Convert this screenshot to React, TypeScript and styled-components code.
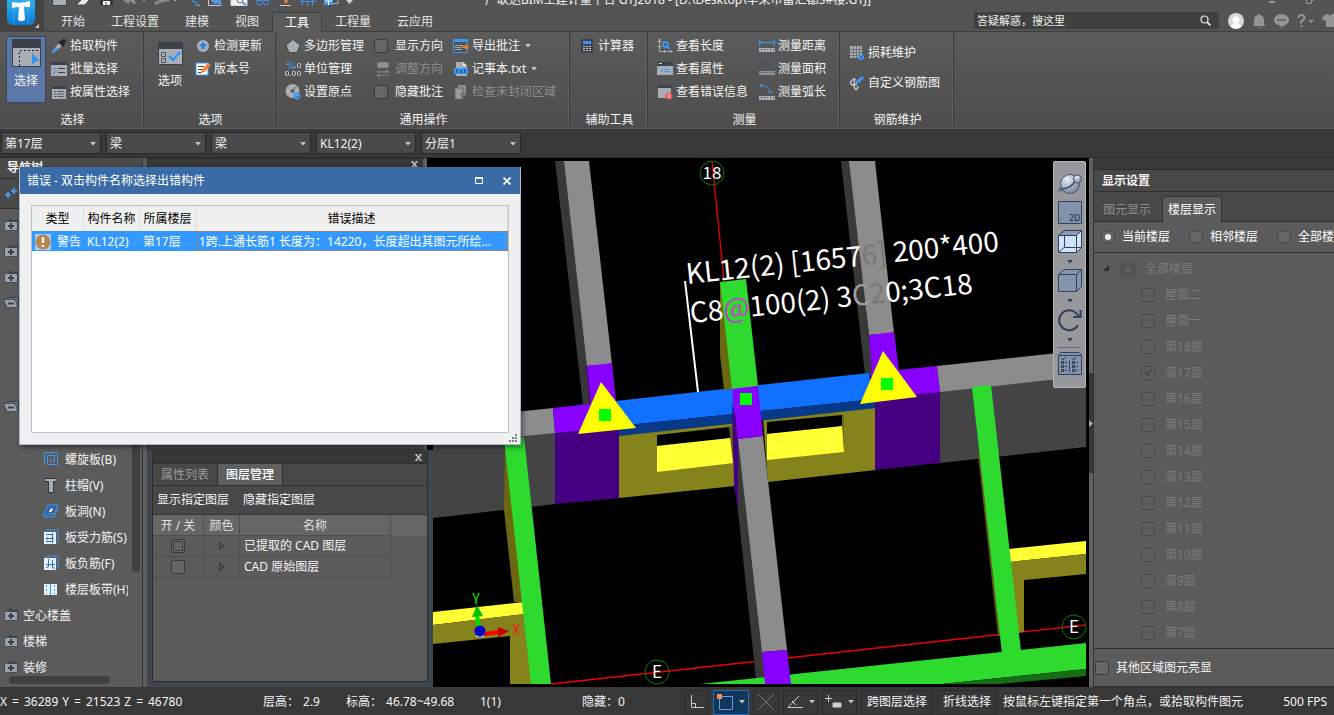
import React from "react";
import styled, { createGlobalStyle, css } from "styled-components";

const Global = createGlobalStyle`
  * { box-sizing: border-box; }
  body { margin: 0; background: #383838; }
  body, button, select, input, table {
    font-family: "Noto Sans", "Noto Sans CJK SC", sans-serif;
    font-size: 12px;
    line-height: 16px;
    color: #f4f4f4;
  }
  button { border: 0; padding: 0; background: none; }
  svg { display: block; flex: none; }
`;

/* ---------- shared controls ---------- */

const Check = styled.input.attrs({ type: "checkbox" })<{ $dim?: boolean; $partial?: boolean }>`
  appearance: none;
  display: grid;
  place-items: center;
  flex: none;
  width: 14px;
  height: 14px;
  margin: 0;
  border: 1px solid ${(p) => (p.$dim ? "#484848" : "#3a3a3a")};
  border-radius: 2px;
  background: ${(p) => (p.$dim ? "#5c5c5c" : "#666")};
  ${(p) =>
    p.$partial &&
    css`
      &::before {
        content: "";
        width: 8px;
        height: 8px;
        border: 1px solid ${p.$dim ? "#484848" : "#3a3a3a"};
        border-radius: 1px;
      }
    `}
  &:checked::before {
    content: "";
    width: 8px;
    height: 8px;
    background: #444;
    clip-path: polygon(0 45%, 18% 32%, 40% 58%, 84% 6%, 100% 20%, 42% 94%);
  }
`;

const Caret = ({ color = "#c4c4c4" }: { color?: string }) => (
  <svg width="6" height="4" viewBox="0 0 6 4">
    <path d="M0 0H6L3 3.5Z" fill={color} />
  </svg>
);

const CloseMark = () => (
  <svg width="7" height="7" viewBox="0 0 7 7" stroke="#bdbdbd" fill="none">
    <path d="M1 .5L6 6.500M6 .5L1 6.500" strokeWidth="1.500" />
    <path d="M0 .5H2.500M4.500 .5H7M0 6.500H2.500M4.500 6.500H7" strokeWidth=".8" />
  </svg>
);

/* ---------- page frame ---------- */

const Page = styled.div`
  display: flex;
  flex-direction: column;
  min-height: 100vh;
  overflow: hidden;
  white-space: nowrap;
`;

const Header = styled.header`
  display: grid;
  grid-template-columns: 44px 1fr;
  background: #545454;
`;

const LogoButton = styled.button`
  height: 32px;
  background: #444;
`;

const HeaderMain = styled.div`
  display: flex;
  flex-direction: column;
  min-width: 0;
`;

const TitleBar = styled.div`
  display: grid;
  grid-template-columns: 424px 1fr 454px;
  height: 12px;
  overflow: hidden;
`;

const QuickTools = styled.div`
  padding-left: 6px;
`;

const AppTitle = styled.h1`
  margin: -9px 0 0;
  height: 18px;
  padding-left: 8px;
  font-size: 12px;
  font-weight: 400;
  line-height: 18px;
  text-align: center;
`;

const WindowButtons = styled.div`
  display: flex;
  justify-content: flex-end;
  gap: 30px;
  padding-right: 20px;
`;

const TabRow = styled.div`
  display: flex;
  border-bottom: 1px solid #3f3f3f;
  height: 20px;
`;

const Tabs = styled.nav`
  display: flex;
  padding-left: 4px;
  margin-right: auto;
`;

const RibbonTab = styled.button<{ $active?: boolean }>`
  height: 20px;
  padding: 0 13px;
  color: #e2e2e2;
  ${(p) =>
    p.$active &&
    css`
      padding: 0 12px;
      color: #fff;
      background: #5b5b5b;
      border: 1px solid #3f3f3f;
      border-bottom: 0;
      border-radius: 2px 2px 0 0;
    `}
`;

const Search = styled.label`
  display: flex;
  align-items: center;
  width: 245px;
  height: 17px;
  padding: 0 8px 0 3px;
  background: #404040;
  input {
    flex: 1;
    min-width: 0;
    border: 0;
    padding: 0;
    background: none;
    font-size: 11px;
    &::placeholder { color: #f0f0f0; opacity: 1; }
  }
`;

const HeaderIcons = styled.div`
  display: flex;
  align-items: center;
  gap: 8px;
  width: 115px;
  height: 17px;
  padding-left: 9px;
  overflow: hidden;
`;

/* ---------- ribbon ---------- */

const Ribbon = styled.div`
  display: flex;
  height: 97px;
  padding-bottom: 3px;
  background: linear-gradient(#5b5b5b, #4d4d4d);
  border-bottom: 1px solid #5a5a5a;
`;

const Group = styled.section<{ $w: number }>`
  display: flex;
  flex-direction: column;
  flex: none;
  width: ${(p) => p.$w}px;
  padding-top: 2px;
  border-right: 1px solid #383838;
  box-shadow: inset -1px 0 #626262;
`;

const GroupBody = styled.div<{ $pad: number; $gap: number }>`
  display: flex;
  flex: none;
  gap: ${(p) => p.$gap}px;
  height: 75px;
  padding-left: ${(p) => p.$pad}px;
`;

const GroupTitle = styled.h2`
  margin: 0;
  padding: 3px 0 0 2px;
  font-size: 12px;
  font-weight: 400;
  line-height: 16px;
  text-align: center;
`;

const BigButton = styled.button<{ $on?: boolean }>`
  display: flex;
  flex-direction: column;
  align-items: center;
  gap: 6px;
  width: 40px;
  height: 67px;
  margin-top: 2px;
  padding-top: 2px;
  border: 1px solid ${(p) => (p.$on ? "#38445a" : "transparent")};
  background: ${(p) => (p.$on ? "#5c78a8" : "none")};
`;

const BigIcon = styled.span`
  display: grid;
  place-items: center;
  height: 28px;
`;

const ItemColumn = styled.div<{ $sparse?: boolean }>`
  display: flex;
  flex-direction: column;
  justify-content: center;
  height: ${(p) => (p.$sparse ? 68 : 69)}px;
  & > * { height: ${(p) => (p.$sparse ? 30 : 23)}px; }
`;

const Tool = styled.button<{ $off?: boolean }>`
  display: flex;
  align-items: center;
  gap: 3px;
  color: ${(p) => (p.$off ? "#8f8f8f" : "#f4f4f4")};
  svg + span + svg { margin-left: 2px; }
`;

const CheckTool = styled.label`
  display: flex;
  align-items: center;
  gap: 7px;
`;

/* ---------- component selectors ---------- */

const SelectorBar = styled.div`
  display: flex;
  gap: 5px;
  height: 29px;
  padding: 3px 1px;
  background: #383838;
  border-bottom: 1px solid #2a2a2a;
`;

const SelectBox = styled.label`
  display: grid;
  grid-template-columns: 1fr 10px;
  align-items: center;
  width: 100px;
  border: 1px solid #282828;
  background: #4a4a4a;
  select {
    grid-area: 1 / 1 / 2 / 3;
    appearance: none;
    width: 100%;
    height: 21px;
    padding: 0 3px;
    border: 0;
    background: none;
  }
  svg { grid-area: 1 / 2; pointer-events: none; }
`;

/* ---------- work area ---------- */

const Workspace = styled.main`
  position: relative;
  display: flex;
  flex: 1;
  min-height: 529px;
`;

const NavPanel = styled.aside`
  display: flex;
  flex-direction: column;
  width: 143px;
  background: #5b5b5b;
  border-right: 1px solid #333;
`;

const NavHeader = styled.h2`
  margin: 0;
  height: 21px;
  padding: 2px 7px;
  font-size: 12px;
  font-weight: 700;
  background: #4a4a4a;
  border-bottom: 1px solid #2e2e2e;
`;

const NavTools = styled.div`
  height: 30px;
  padding: 9px 4px;
  background: #4a4a4a;
  border-bottom: 1px solid #2e2e2e;
`;

const NavBody = styled.div`
  display: flex;
  flex: 1 1 0;
  min-height: 0;
  padding-top: 3px;
  overflow: hidden;
`;

const NavTree = styled.ul`
  flex: 1;
  margin: 0;
  padding: 0;
  list-style: none;
  overflow: hidden;
`;

const NavItem = styled.li<{ $child?: boolean }>`
  display: flex;
  align-items: center;
  gap: ${(p) => (p.$child ? 6 : 4)}px;
  height: 26px;
  padding-left: ${(p) => (p.$child ? 43 : 3)}px;
  span { padding-top: 2px; }
`;

const VScroll = styled.div`
  width: 14px;
  div {
    width: 8px;
    height: 360px;
    margin: 0 4px;
    border-radius: 4px;
    background: #404040;
  }
`;

const HScroll = styled.div`
  height: 14px;
  padding: 3px 9px;
  div {
    width: 101px;
    height: 8px;
    border-radius: 4px;
    background: #404040;
  }
`;

const Splitter = styled.div`
  width: 4px;
  background: #5e5e5e;
`;

const Dock = styled.div`
  display: flex;
  flex-direction: column;
  gap: 1px;
  width: 286px;
  padding-bottom: 5px;
  background: #3e464f;
`;

const UpperDock = styled.div`
  height: 292px;
  margin-right: 6px;
  border: 1px solid #2e2e2e;
  border-right: 4px solid #5e5e5e;
  box-shadow: 6px 0 #000;
  background: #454545;
`;

const PaneBar = styled.div`
  display: flex;
  align-items: center;
  justify-content: flex-end;
  height: 11px;
  padding-right: 5px;
  background: #383838;
`;

const LayerPane = styled.section`
  flex: 1;
  margin: 0 5px;
  border: 1px solid #2c2c2c;
  background: #5b5b5b;
`;

const LayerTabs = styled.div`
  display: flex;
  height: 23px;
  background: #484848;
  border-top: 1px solid #2e2e2e;
  border-bottom: 1px solid #2e2e2e;
`;

const LayerTab = styled.button<{ $active?: boolean }>`
  width: 65px;
  color: ${(p) => (p.$active ? "#fff" : "#9a9a9a")};
  font-weight: ${(p) => (p.$active ? 500 : 400)};
  background: ${(p) => (p.$active ? "#5f5f5f" : "none")};
  border-right: 1px solid #2e2e2e;
`;

const LayerActions = styled.div`
  display: flex;
  gap: 14px;
  height: 29px;
  padding-left: 4px;
  background: #484848;
  border-bottom: 1px solid #333;
`;

const LayerTable = styled.table`
  width: 100%;
  border-collapse: separate;
  border-spacing: 0;
  table-layout: fixed;
  th, td {
    height: 21px;
    padding: 0;
    font-weight: 400;
    text-align: center;
    border-right: 1px solid #4e4e4e;
    border-bottom: 1px solid #4e4e4e;
  }
  th { padding-top: 1px; background: #666; color: #e0e0e0; }
  th:last-child { border: 0; }
  td:nth-child(3) { padding-left: 4px; text-align: left; }
  td:last-child { border: 0; }
  td input, td svg { margin: 0 auto; }
`;

const Viewport = styled.section`
  position: relative;
  flex: 1;
  min-width: 0;
  background: #000;
  overflow: hidden;
`;

const Scene = styled.svg`
  width: 100%;
  height: 100%;
`;

const ViewTools = styled.div`
  position: absolute;
  top: 3px;
  right: 3px;
  display: flex;
  flex-direction: column;
  align-items: center;
  width: 33px;
  height: 227px;
  padding-top: 10px;
  border: 1px solid #b4b6ba;
  border-radius: 2px;
  background: #96989e;
`;

const ViewButton = styled.button`
  display: flex;
  flex-direction: column;
  align-items: center;
  gap: 6px;
  margin-bottom: 5px;
`;

const ViewRule = styled.hr`
  width: 23px;
  margin: 0 0 4px;
  border: 0;
  border-top: 1px solid #6a6a6a;
`;

const RightSplitter = styled.div`
  display: flex;
  flex-direction: column;
  width: 4px;
  background: #616161;
`;

const CollapseHandle = styled.button`
  display: grid;
  place-items: center;
  height: 100px;
  margin-top: 215px;
  background: #383838;
`;

/* ---------- display settings ---------- */

const Settings = styled.aside`
  display: flex;
  flex-direction: column;
  width: 241px;
  background: #5b5b5b;
  border-left: 1px solid #333;
  overflow: hidden;
`;

const SettingsGap = styled.div`
  height: 12px;
  background: #3a3a3a;
  border-bottom: 1px solid #2c2c2c;
`;

const SettingsTitle = styled.h2`
  margin: 0;
  height: 22px;
  padding: 3px 8px;
  font-size: 12px;
  font-weight: 700;
  background: #484848;
  border-bottom: 1px solid #303030;
`;

const SettingsTabs = styled.div`
  display: flex;
  align-items: flex-end;
  height: 30px;
  background: #484848;
  box-shadow: inset 0 -1px #303030;
`;

const SettingsTab = styled.button<{ $active?: boolean }>`
  width: ${(p) => (p.$active ? 60 : 68)}px;
  height: 26px;
  padding-top: 1px;
  ${(p) =>
    p.$active
      ? css`
          color: #fff;
          background: #5b5b5b;
          border: 1px solid #303030;
          border-bottom: 0;
          border-radius: 3px 3px 0 0;
        `
      : css`
          padding-right: 2px;
          color: #8e8e8e;
        `}
`;

const RadioRow = styled.div`
  display: flex;
  gap: 19px;
  height: 31px;
  padding-left: 7px;
  border-bottom: 1px solid #303030;
`;

const RadioLabel = styled.label`
  display: flex;
  align-items: center;
  flex: none;
  gap: 7px;
  color: #fff;
  input {
    appearance: none;
    display: grid;
    place-items: center;
    width: 14px;
    height: 14px;
    margin: 0;
    border: 1px solid #404040;
    border-radius: 50%;
    background: #666;
  }
  input:checked::before {
    content: "";
    width: 6px;
    height: 6px;
    border-radius: 50%;
    background: #eee;
  }
`;

const FloorTree = styled.ul`
  flex: 1;
  margin: 0;
  padding: 3px 0 0;
  list-style: none;
`;

const FloorRow = styled.li<{ $root?: boolean }>`
  display: flex;
  align-items: center;
  gap: 11px;
  height: 26px;
  padding-left: ${(p) => (p.$root ? 8 : 47)}px;
  label {
    display: flex;
    align-items: center;
    gap: 10px;
    color: #7c7c7c;
  }
`;

const SettingsFoot = styled.label`
  display: flex;
  align-items: center;
  gap: 7px;
  height: 39px;
  padding-left: 1px;
  border-top: 1px solid #303030;
  border-bottom: 1px solid #303030;
`;

/* ---------- error dialog ---------- */

const Dialog = styled.section`
  position: absolute;
  top: 9px;
  left: 19px;
  display: flex;
  flex-direction: column;
  width: 502px;
  height: 278px;
  color: #000;
  background: #f0f0f0;
  border: 1px solid #a8bccf;
  border-top: 0;
  box-shadow: 2px 2px 5px #0007;
`;

const DialogTitle = styled.header`
  display: flex;
  align-items: center;
  gap: 20px;
  height: 27px;
  padding: 0 9px 0 7px;
  color: #fff;
  background: #396ba6;
  span { flex: 1; }
`;

const DialogBody = styled.div`
  flex: 1;
  margin: 11px 11px 0;
  border: 1px solid #bfc3c7;
  background: #fff;
`;

const ErrorTable = styled.table`
  width: 100%;
  border-collapse: separate;
  border-spacing: 0;
  table-layout: fixed;
  th {
    height: 25px;
    padding: 0;
    font-weight: 400;
    color: #000;
    background: #f0f0f0;
    border-right: 1px solid #dcdcdc;
  }
  td {
    height: 20px;
    padding: 1px 0 0 3px;
    color: #fff;
    background: #3399ff;
  }
  td:first-child div { display: flex; align-items: center; gap: 6px; }
  td:last-child { padding-left: 2px; border: 1px dotted #d07018; }
`;

const Grip = styled.div`
  display: flex;
  justify-content: flex-end;
  height: 11px;
  padding: 1px 3px;
`;

/* ---------- status bar ---------- */

const Status = styled.footer`
  display: flex;
  align-items: center;
  gap: 4px;
  height: 28px;
  padding: 2px 7px 0 0;
  background: #383838;
`;

const Readouts = styled.div`
  display: flex;
`;

const Readout = styled.div<{ $w: number }>`
  display: flex;
  gap: 4px;
  width: ${(p) => p.$w}px;
`;

const Coordinate = styled.span`
  display: flex;
  gap: 5px;
`;

const StatusButton = styled.button<{ $w: number; $on?: boolean }>`
  display: flex;
  align-items: center;
  justify-content: center;
  gap: 6px;
  width: ${(p) => p.$w}px;
  height: 25px;
  border: 1px solid ${(p) => (p.$on ? "#2a6cb0" : "#2b2b2b")};
  background: ${(p) => (p.$on ? "#12355a" : "none")};
`;

const Hint = styled.span`
  margin: 0 auto 0 2px;
`;

/* ---------- icons ---------- */

const B = "#3d97f0";
const G = "#a9adb5";
const D = "#3b4049";

const glyphs: Record<string, React.ReactNode> = {
  dropper: (
    <>
      <path d="M1 15L2 12L8 5L11 8L4 14Z" fill={G} />
      <path d="M1 15L2 12L5 9L7 11L4 14Z" fill={B} />
      <path d="M7 4L12 9L13 7.500L15 3Q15 0 12 1L9 3Z" fill="#24272c" />
    </>
  ),
  batch: (
    <>
      <path d="M0 1H16V15H0Z" fill={G} />
      <path d="M0 1H16V4H0Z" fill={D} />
      <path d="M2 7l1 2 2-3M2 11l1 2 2-3" stroke={B} fill="none" />
      <path d="M7 7.500H14M7 11.500H14" stroke={D} />
    </>
  ),
  list: (
    <>
      <path d="M1 2H15V15H1Z" fill={G} />
      <path d="M1 2H15V5H1Z" fill={D} />
      <path d="M3 7.500H5M3 10H5M3 12.500H5M6 7.500H13M6 10H13M6 12.500H13" stroke="#555b66" />
    </>
  ),
  update: (
    <>
      <circle cx="8" cy="8" r="6" fill={G} />
      <path d="M8 4L12 8H9.500V11H6.500V8H4Z" fill="#1c80e4" />
    </>
  ),
  version: (
    <>
      <path d="M1 2H13V14H1Z" fill="#fff" stroke={B} />
      <path d="M3 5.500H9M3 8.500H7M3 11.500H6" stroke="#444" />
      <path d="M6 12L7 8.500L13 2L16 4L9.500 11Z" fill="#f0873a" />
    </>
  ),
  polygon: <path d="M8 1.500L15 7L12 14.500H4L1 7Z" fill="#a9adb5" stroke="#44474c" />,
  units: (
    <>
      <g stroke={B} fill="none">
        <circle cx="3" cy="2.500" r="1.500" />
        <circle cx="8" cy="6" r="1.500" />
        <path d="M8 .5L3 8" />
      </g>
      <g fill="none" stroke="#d0d2d6">
        <rect x="12.500" y="2.500" width="3" height="4" rx="1" />
        <rect x=".5" y="10.500" width="3" height="4" rx="1" />
        <rect x="7.500" y="10.500" width="3" height="4" rx="1" />
        <rect x="12.500" y="10.500" width="3" height="4" rx="1" />
        <path d="M5 14.500H6M10 6.500H11" />
      </g>
    </>
  ),
  origin: (
    <>
      <circle cx="7.500" cy="7" r="7" fill={G} />
      <circle cx="7.500" cy="7" r="2" fill="#5b5f66" />
      <path d="M7 7L12 2" stroke="#5b5f66" />
      <circle cx="12" cy="12" r="2.500" fill="none" stroke={B} strokeWidth="2" />
      <path d="M12 8V16M8 12H16" stroke={B} strokeDasharray="2 4" />
    </>
  ),
  direction: (
    <>
      <path d="M3 2H13V7H3Z" fill="#909090" />
      <path d="M3 10.500H12M5 13.500H13" stroke="#858585" />
      <path d="M11 8.500L14 10.500L11 12ZM5 12L2 13.500L5 15.500Z" fill="#858585" />
    </>
  ),
  exportNote: (
    <>
      <path d="M.5 1.500H14.500V14.500H.5Z" fill="#4a4f58" stroke={B} />
      <path d="M0 1H15V4H0Z" fill={B} />
      <path d="M2 7.500H10M2 9.500H8M2 11.500H9" stroke={G} />
      <path d="M9 8H12V5.500L16 9L12 12.500V10H9Z" fill="#f08028" />
    </>
  ),
  txt: (
    <>
      <path d="M3 1H10L14 5V15H3Z" fill={G} />
      <path d="M10 1V5H14Z" fill="#eee" />
      <path d="M1 7H15V13H1Z" fill={B} />
      <path d="M4 8V12M3 9.500H5M7 9L9 12M9 9L7 12M12 8V12M11 9.500H13" stroke="#1c4f86" fill="none" />
    </>
  ),
  region: (
    <>
      <path d="M5 1H13V12H5Z" fill="#8f8f8f" />
      <path d="M2 4H10V15H2Z" fill="#9c9c9c" stroke="#666" />
      <circle cx="10" cy="11" r="2" fill="none" stroke="#555" />
      <path d="M11.500 12.500L14 15" stroke="#555" strokeWidth="2" />
    </>
  ),
  calc: (
    <>
      <path d="M2 1H14V15H2Z" fill={D} />
      <path d="M4 3H12V6H4Z" fill={B} />
      <path d="M4 8.500H12M4 10.500H12M4 12.500H12" stroke="#c8ccd2" strokeDasharray="2 1" />
    </>
  ),
  length: (
    <>
      <path d="M2.500 1V13.500H15M.5 3.500H4.500M.5 8.500H4.500M7.500 11.500V15" stroke={G} fill="none" />
      <path d="M2.500 0L4 2.500H1ZM16 13.500L13.500 12V15Z" fill={G} />
      <circle cx="8.500" cy="6.500" r="2.500" fill="none" stroke={B} strokeWidth="1.800" />
      <path d="M10 8.500L12.500 11" stroke={B} strokeWidth="2" />
    </>
  ),
  props: (
    <>
      <path d="M0 1H16V14H0Z" fill={G} />
      <path d="M0 1H16V5H0Z" fill={D} />
      <path d="M2 2.500H5" stroke="#ddd" />
      <path d="M4 8.500H6M7 8.500H13M4 10.500H6M7 10.500H13" stroke={B} />
    </>
  ),
  errors: (
    <>
      <path d="M1 1H14V14H1Z" fill={G} />
      <path d="M1 1H14V4H1Z" fill={D} />
      <circle cx="12" cy="12" r="3.500" fill="#ee5a5a" />
      <path d="M12 10V14" stroke="#fff" />
    </>
  ),
  distance: (
    <>
      <path d="M.5 1V8M15.500 1V8M1 4.500H15M3 2.500L1 4.500L3 6.500M13 2.500L15 4.500L13 6.500" stroke={B} fill="none" />
      <path d="M0 10H16V14H0Z" fill={G} />
      <path d="M2 11.500H15" stroke={D} strokeDasharray="1 2" />
    </>
  ),
  area: (
    <>
      <path d="M1.500 8.500V2.500L14.500 5.500V8.500Z" stroke="#47566b" fill="none" />
      <path d="M0 10H16V14H0Z" fill="#8e9196" />
      <path d="M2 11.500H15" stroke={D} strokeDasharray="1 2" />
    </>
  ),
  arc: (
    <>
      <path d="M1 1.500Q10 1 11.500 9M9 7L11.500 9.500L14 7M3 0L1 1.500L3 4" stroke={B} fill="none" />
      <path d="M0 12H16V16H0Z" fill={G} />
      <path d="M2 13.500H15" stroke={D} strokeDasharray="1 2" />
    </>
  ),
  loss: (
    <>
      <path d="M1 1H13V13H1Z" fill={G} />
      <path d="M1 4.500H13M1 7.500H13M1 10.500H13M4.500 1V13M7.500 1V13M10.500 1V13" stroke="#6d727a" />
      <circle cx="12" cy="12" r="2" fill="#555" stroke={B} strokeWidth="2" />
    </>
  ),
  rebar: (
    <>
      <path d="M5 4Q0 7 2 9T8 9M6 3Q4 10 6 14Q8 16 9 11" stroke="#c9ccd1" fill="none" strokeWidth="1.400" />
      <path d="M6 9L7 6L13 1L15 3L10 8Z" fill={B} />
    </>
  ),
};

const Icon = ({ name, size = 16 }: { name: string; size?: number }) => (
  <svg width={size} height={size} viewBox="0 0 16 16">
    {glyphs[name]}
  </svg>
);

const ToolItem = ({ icon, text, menu, off }: { icon: string; text: string; menu?: boolean; off?: boolean }) => (
  <Tool $off={off} disabled={off}>
    <Icon name={icon} />
    <span>{text}</span>
    {menu && <Caret />}
  </Tool>
);

const FolderClosed = () => (
  <svg width="16" height="16" viewBox="0 0 16 16">
    <path d="M6 1V5H15V3H10Z" fill="#3b4049" />
    <path d="M1.500 4.500H14.500V13.500H1.500Z" fill="#9aa0ab" stroke="#444a54" />
    <path d="M8 6V12M5 9H11" stroke="#3b4049" strokeWidth="2" />
  </svg>
);

const FolderOpen = () => (
  <svg width="16" height="16" viewBox="0 0 16 16">
    <path d="M4 5L6 2.500H15.500V12" fill="#6a707a" stroke="#3b4049" />
    <path d="M.5 4.500H12L15 12.500H4Z" fill="#9aa0ab" stroke="#444a54" />
    <path d="M5 8.500H11" stroke="#3b4049" strokeWidth="2" />
  </svg>
);

const slabGlyphs: React.ReactNode[] = [
  <path key="a" d="M1.500 14.500V1.500H14.500V13.500H4.500V4.500H11.500V10.500H7.500V7" fill="none" stroke={B} />,
  <path key="b" d="M1.500 1.500H14.500V4.500H10.500V15.500H5.500V4.500H1.500Z" fill={G} stroke="#32363d" />,
  <g key="c">
    <path d="M1 11L5 2H15L11 11ZM1 11V14H11L15 5" fill="#2f62a8" stroke={B} />
    <path d="M6 9L8 5L10 6L8 9Z" fill="#fff" />
  </g>,
  <g key="d">
    <path d="M1 4L4 1H15V12L12 15" fill="none" stroke={B} />
    <path d="M1 3H13V15H1Z" fill="#e6f0fb" />
    <path d="M3 5.500H9M3 9.500H11M3 12.500H9M9.500 4V14M5 9.500L3.500 8M5 9.500L3.500 11" fill="none" stroke="#2a6fc0" />
  </g>,
  <g key="e">
    <path d="M1 4L4 1H15V12L12 15" fill="none" stroke={B} />
    <path d="M1 3H13V15H1Z" fill="#e6f0fb" />
    <path d="M5.500 4V12H3M9.500 5V13H12M3 9.500H12" fill="none" stroke="#2a6fc0" />
  </g>,
  <g key="f">
    <path d="M1 3H7V14H1ZM8 3H14V14H8Z" fill="#e6f0fb" />
    <path d="M3.500 4V13M11.500 4V13" stroke={B} strokeDasharray="2 2" />
    <path d="M7.500 3V14" stroke={B} />
  </g>,
];

/* ---------- data ---------- */

const ribbonTabs = ["开始", "工程设置", "建模", "视图", "工具", "工程量", "云应用"];
const selectors = [
  ["楼层", "第17层"],
  ["构件大类", "梁"],
  ["构件类型", "梁"],
  ["构件", "KL12(2)"],
  ["分层", "分层1"],
];
const slabItems = ["螺旋板(B)", "柱帽(V)", "板洞(N)", "板受力筋(S)", "板负筋(F)", "楼层板带(H)"];
const floors = ["屋面二", "屋面一", "第18层", "第17层", "第16层", "第15层", "第14层", "第13层", "第12层", "第11层", "第10层", "第9层", "第8层", "第7层"];

/* ---------- sections ---------- */

const Logo = () => (
  <svg width="44" height="32" viewBox="0 0 44 32">
    <defs>
      <linearGradient id="logo" x1="0" y1="0" x2="0" y2="1">
        <stop offset="0" stopColor="#35c3f6" />
        <stop offset="1" stopColor="#0c78d8" />
      </linearGradient>
    </defs>
    <rect x="7" y="-8" width="28" height="33" rx="6" fill="url(#logo)" />
    <path d="M7 8H35M14 0V25M28 0V25" stroke="#66ccf8" strokeOpacity=".4" />
    <path d="M12 2Q21 4 30 1V7Q27 7 24 6.500L25 20Q21 22 18 20L19 7Q15 7 12 8Z" fill="#fff" />
    <path d="M35 28L39 24V28Z" fill="#ccc" />
  </svg>
);

const QuickIcons = () => (
  <svg width="308" height="7" viewBox="50 0 308 7" fill="none">
    <path d="M52.500 -6V5.500H66.500V-6Z" fill={G} stroke={D} />
    <path d="M76 5L82 -1H90L85 5Z" fill="#e4e6ea" stroke={D} />
    <path d="M100 -5H113V5.500H100Z" fill="#34383f" />
    <path d="M103 1H110V5H103Z" fill="#f4f4f4" />
    <path d="M106 2V5" stroke="#444" />
    <path d="M123 0L129 -3V5Z" fill="#8a8a8a" />
    <path d="M128 0Q135 0 134 4M169 0Q160 0 155 4" stroke="#8a8a8a" strokeWidth="3" />
    <path d="M143 0H145M174 0H176" stroke="#aaa" strokeWidth="2" />
    <path d="M192 1.500H196V5.500H200M197 3L200 5.500L197 8M193 -2V2" stroke={B} />
    <path d="M208.500 -5V5.500H220V-5M211 1H218" stroke="#c9cdd4" />
    <circle cx="216" cy="0" r="3" stroke={B} strokeWidth="2" />
    <path d="M218 2L222 6" stroke={B} strokeWidth="2" />
    <path d="M231 -5V5.500H247V-5" fill="#f4f4f4" stroke="#ddd" />
    <circle cx="240" cy="0" r="3" stroke="#666" />
    <path d="M242 2L246 5" stroke={B} strokeWidth="2" />
    <circle cx="259" cy="2.500" r="2.500" stroke={B} />
    <circle cx="266" cy="2.500" r="2.500" stroke={B} />
    <path d="M256 0H269" stroke={B} />
    <path d="M280 5.500H291" stroke="#c9cdd4" />
    <path d="M286 0V3" stroke="#f08028" strokeWidth="3" />
    <path d="M300 1.500H316M302.500 0V6M307.500 0V6M312.500 0V6" stroke={B} />
    <path d="M324 -3H333V5H324Z" fill={B} />
    <path d="M325 1H332M328.500 0V5" stroke="#fff" />
    <path d="M333 3.500H338V-2" stroke={G} />
    <path d="M346 0H353L349.500 4Z" fill="#d0d0d0" />
  </svg>
);

const TopHeader = () => (
  <Header>
    <LogoButton aria-label="应用菜单">
      <Logo />
    </LogoButton>
    <HeaderMain>
      <TitleBar>
        <QuickTools>
          <QuickIcons />
        </QuickTools>
        <AppTitle>广联达BIM土建计量平台 GTJ2018 - [D:\Desktop\华荣市富汇都3#楼.GTJ]</AppTitle>
        <WindowButtons>
          <svg width="7" height="5" viewBox="0 0 7 5">
            <path d="M0 2H6" stroke="#999" strokeWidth="2" />
          </svg>
          <svg width="8" height="5" viewBox="0 0 8 5">
            <path d="M.5 0V3.500H5.500V0M5 .5H7.500" stroke="#999" fill="none" />
          </svg>
        </WindowButtons>
      </TitleBar>
      <TabRow>
        <Tabs>
          {ribbonTabs.map((t) => (
            <RibbonTab key={t} $active={t === "工具"}>
              {t}
            </RibbonTab>
          ))}
        </Tabs>
        <Search>
          <input aria-label="搜索" placeholder="答疑解惑，搜这里" />
          <svg width="11" height="11" viewBox="0 0 11 11" stroke="#e0e0e0" fill="none">
            <circle cx="4.500" cy="4.500" r="3.500" strokeWidth="1.200" />
            <path d="M7 7L10.500 10.500" strokeWidth="1.800" />
          </svg>
        </Search>
        <HeaderIcons>
          <svg width="16" height="16" viewBox="0 0 16 16">
            <circle cx="8" cy="8" r="8" fill="#d4d8dc" />
            <circle cx="8" cy="7" r="3.500" fill="#fff" />
            <path d="M3 14Q4 10 8 10T13 14Q8 17 3 14Z" fill="#fff" />
          </svg>
          <svg width="14" height="16" viewBox="0 0 14 16" fill="#949494">
            <path d="M7 1Q8 1 8 2Q12 3 12 7V10L13 13H1L2 10V7Q2 3 6 2Q6 1 7 1ZM5 14H9Q8 16 5 14Z" />
          </svg>
          <svg width="15" height="15" viewBox="0 0 15 15">
            <path d="M7.500 1C12 1 15 4 15 7S12 12.500 9.500 12.500L8 15L6 12.500C2 12 0 10 0 7S3 1 7.500 1Z" fill="#949494" />
            <path d="M3.500 7H5.500M6.500 7H8.500M9.500 7H11.500" stroke="#505050" strokeWidth="2" />
          </svg>
          <svg width="17" height="14" viewBox="0 0 17 14" fill="none">
            <path d="M1.500 4Q1.500 1 4.500 1T7.500 4Q7.500 5.500 5.500 6.500T4.500 9.500" stroke="#949494" strokeWidth="2" />
            <path d="M3.500 11H5.500V13H3.500ZM11 6H17L14 9Z" fill="#949494" />
          </svg>
          <svg width="16" height="14" viewBox="0 0 16 14" fill="#949494">
            <path d="M0 4L4 0H6Q8 3 10 0H12L16 4L14 7L12 6V13H4V6L2 7Z" />
          </svg>
        </HeaderIcons>
      </TabRow>
    </HeaderMain>
  </Header>
);

const RibbonBar = () => (
  <Ribbon>
    <Group $w={144}>
      <GroupBody $pad={6} $gap={5}>
        <BigButton $on>
          <BigIcon>
            <svg width="29" height="28" viewBox="0 0 29 28">
              <path d="M.5 .5H28.500V27.500H.5Z" fill={G} stroke={D} />
              <path d="M0 0H29V9H0Z" fill={D} />
              <path d="M7.500 27V11.500H28" stroke="#22252a" strokeDasharray="2 2" fill="none" />
              <path d="M20 14L28 22L24 22L20 26Z" fill="#2f94f2" />
            </svg>
          </BigIcon>
          选择
        </BigButton>
        <ItemColumn>
          <ToolItem icon="dropper" text="拾取构件" />
          <ToolItem icon="batch" text="批量选择" />
          <ToolItem icon="list" text="按属性选择" />
        </ItemColumn>
      </GroupBody>
      <GroupTitle>选择</GroupTitle>
    </Group>
    <Group $w={132}>
      <GroupBody $pad={6} $gap={5}>
        <BigButton>
          <BigIcon>
            <svg width="25" height="23" viewBox="0 0 25 23">
              <path d="M.5 .5H24.500V22.500H.5Z" fill={G} stroke={D} />
              <path d="M0 0H25V7H0Z" fill={D} />
              <path d="M3.500 10.500H7.500V14.500H3.500ZM3.500 16.500H7.500V20.500H3.500Z" fill="none" stroke="#4b5058" />
              <path d="M11 14L15 18L22 10" stroke="#2f94f2" strokeWidth="2.500" fill="none" />
            </svg>
          </BigIcon>
          选项
        </BigButton>
        <ItemColumn>
          <ToolItem icon="update" text="检测更新" />
          <ToolItem icon="version" text="版本号" />
          <span />
        </ItemColumn>
      </GroupBody>
      <GroupTitle>选项</GroupTitle>
    </Group>
    <Group $w={294}>
      <GroupBody $pad={9} $gap={10}>
        <ItemColumn>
          <ToolItem icon="polygon" text="多边形管理" />
          <ToolItem icon="units" text="单位管理" />
          <ToolItem icon="origin" text="设置原点" />
        </ItemColumn>
        <ItemColumn>
          <CheckTool>
            <Check />
            显示方向
          </CheckTool>
          <Tool $off disabled>
            <Icon name="direction" size={18} />
            <span>调整方向</span>
          </Tool>
          <CheckTool>
            <Check />
            隐藏批注
          </CheckTool>
        </ItemColumn>
        <ItemColumn>
          <ToolItem icon="exportNote" text="导出批注" menu />
          <ToolItem icon="txt" text="记事本.txt" menu />
          <ToolItem icon="region" text="检查未封闭区域" off />
        </ItemColumn>
      </GroupBody>
      <GroupTitle>通用操作</GroupTitle>
    </Group>
    <Group $w={78}>
      <GroupBody $pad={9} $gap={0}>
        <ItemColumn>
          <ToolItem icon="calc" text="计算器" />
          <span />
          <span />
        </ItemColumn>
      </GroupBody>
      <GroupTitle>辅助工具</GroupTitle>
    </Group>
    <Group $w={192}>
      <GroupBody $pad={9} $gap={11}>
        <ItemColumn>
          <ToolItem icon="length" text="查看长度" />
          <ToolItem icon="props" text="查看属性" />
          <ToolItem icon="errors" text="查看错误信息" />
        </ItemColumn>
        <ItemColumn>
          <ToolItem icon="distance" text="测量距离" />
          <ToolItem icon="area" text="测量面积" />
          <ToolItem icon="arc" text="测量弧长" />
        </ItemColumn>
      </GroupBody>
      <GroupTitle>测量</GroupTitle>
    </Group>
    <Group $w={114}>
      <GroupBody $pad={9} $gap={0}>
        <ItemColumn $sparse>
          <ToolItem icon="loss" text="损耗维护" />
          <ToolItem icon="rebar" text="自定义钢筋图" />
        </ItemColumn>
      </GroupBody>
      <GroupTitle>钢筋维护</GroupTitle>
    </Group>
  </Ribbon>
);

const Navigation = () => (
  <NavPanel>
    <NavHeader>导航树</NavHeader>
    <NavTools>
      <svg width="14" height="12" viewBox="0 0 14 12" stroke="#4a96e6" strokeWidth="2">
        <path d="M4 4V10M1 7H7M10 0V6M7 3H13" />
      </svg>
    </NavTools>
    <NavBody>
      <NavTree>
        <NavItem><FolderClosed /></NavItem>
        <NavItem><FolderClosed /></NavItem>
        <NavItem><FolderClosed /></NavItem>
        <NavItem><FolderOpen /></NavItem>
        <NavItem />
        <NavItem />
        <NavItem />
        <NavItem><FolderOpen /></NavItem>
        <NavItem />
        {slabItems.map((t, i) => (
          <NavItem key={t} $child>
            <svg width="16" height="16" viewBox="0 0 16 16">{slabGlyphs[i]}</svg>
            <span>{t}</span>
          </NavItem>
        ))}
        {["空心楼盖", "楼梯", "装修"].map((t) => (
          <NavItem key={t}>
            <FolderClosed />
            <span>{t}</span>
          </NavItem>
        ))}
      </NavTree>
      <VScroll>
        <div />
      </VScroll>
    </NavBody>
    <HScroll>
      <div />
    </HScroll>
  </NavPanel>
);

const Expander = () => (
  <svg width="6" height="8" viewBox="0 0 6 8">
    <path d="M1 .5L5 4L1 7.500Z" fill="none" stroke="#2e2e2e" />
  </svg>
);

const Layers = () => (
  <Dock>
    <UpperDock>
      <PaneBar>
        <CloseMark />
      </PaneBar>
    </UpperDock>
    <LayerPane>
      <PaneBar>
        <CloseMark />
      </PaneBar>
      <LayerTabs>
        <LayerTab>属性列表</LayerTab>
        <LayerTab $active>图层管理</LayerTab>
      </LayerTabs>
      <LayerActions>
        <button>显示指定图层</button>
        <button>隐藏指定图层</button>
      </LayerActions>
      <LayerTable>
        <colgroup>
          <col width="51" />
          <col width="36" />
          <col width="151" />
          <col />
        </colgroup>
        <thead>
          <tr>
            <th>开 / 关</th>
            <th>颜色</th>
            <th>名称</th>
            <th />
          </tr>
        </thead>
        <tbody>
          <tr>
            <td><Check $partial aria-label="已提取的 CAD 图层" /></td>
            <td><Expander /></td>
            <td>已提取的 CAD 图层</td>
            <td />
          </tr>
          <tr>
            <td><Check aria-label="CAD 原始图层" /></td>
            <td><Expander /></td>
            <td>CAD 原始图层</td>
            <td />
          </tr>
        </tbody>
      </LayerTable>
    </LayerPane>
  </Dock>
);

const GridBubble = ({ x, y, text }: { x: number; y: number; text: string }) => (
  <g>
    <polygon
      points="0,-12 7,-10 11,-5 12,1 10,7 5,11 -1,12 -7,10 -11,5 -12,-1 -10,-7 -5,-11"
      transform={`translate(${x} ${y})`}
      fill="none"
      stroke="#0a7a0a"
    />
    <text x={x} y={y + 6} fontSize="17" textAnchor="middle" fill="#fff">
      {text}
    </text>
  </g>
);

const Model = () => (
  <Scene viewBox="433 158 656 529" preserveAspectRatio="xMinYMin slice" fontFamily='"Noto Sans CJK SC", "Noto Sans", sans-serif'>
    {/* axis lines */}
    <path d="M712 161L725 290M551 684L1086 625" stroke="#f00000" strokeWidth="1.300" />

    {/* left and right far beams */}
    <polygon points="555,161 565,161 592,404 583,405" fill="#383838" />
    <polygon points="564,161 589,161 612,364 587,366" fill="#8c8c8c" />
    <polygon points="586,366 592,366 592,404 590,404" fill="#440080" />
    <polygon points="587,366 612,363 616,402 591,404" fill="#8800ff" />
    <polygon points="841,161 850,161 873,374 865,375" fill="#383838" />
    <polygon points="849,161 875,161 894,333 869,335" fill="#8c8c8c" />
    <polygon points="869,335 894,332 899,371 872,374" fill="#8800ff" />

    {/* side walls of the main beam */}
    <polygon points="433,443 555,432 555,504 433,518" fill="#444" />
    <polygon points="555,432 620,426 620,498 555,504" fill="#440080" />
    <polygon points="619,435 735,423 735,486 619,498" fill="#86821c" />
    <polygon points="763,419 876,407 876,470 768,482" fill="#86821c" />
    <polygon points="657,435 729,427 731,438 657,446" fill="#000" />
    <polygon points="657,446 731,438 734,463 657,472" fill="#ffff33" />
    <polygon points="729,427 733,424 735,464 733,463" fill="#5f5c10" />
    <polygon points="767,422 842,415 842,427 767,434" fill="#000" />
    <polygon points="767,434 842,426 844,452 767,460" fill="#ffff33" />
    <polygon points="842,415 844,415 844,451" fill="#6b6812" />
    <polygon points="875,397 940,391 940,463 875,470" fill="#440080" />
    <polygon points="940,391 1086,376 1086,447 940,463" fill="#444" />

    {/* top faces of the main beam */}
    <polygon points="515,412 553,408 555,433 515,437" fill="#8c8c8c" />
    <polygon points="553,408 616,401 620,427 555,433" fill="#8800ff" />
    <polygon points="616,401 869,373 875,399 619,426" fill="#1070ff" />
    <polygon points="619,426 875,399 876,408 619,436" fill="#083888" />
    <polygon points="870,373 937,366 940,392 875,398" fill="#8800ff" />
    <polygon points="937,366 1086,350 1086,376 940,392" fill="#8c8c8c" />

    {/* middle cross beam */}
    <polygon points="720,282 724,282 733,389 724,390 720,355" fill="#6b6812" />
    <polygon points="720,282 746,279 758,386 732,389" fill="#2dda2d" />
    <polygon points="732,400 740,439 740,520 738,511 734,485" fill="#440080" />
    <polygon points="738,439 763,640 765,684 756,679 738,511" fill="#383838" />
    <polygon points="738,439 763,436 787,650 762,652" fill="#8c8c8c" />
    <polygon points="732,389 758,386 763,436 738,439" fill="#8800ff" />

    {/* lower beams */}
    <polygon points="700,684 1086,643 1086,669 942,684" fill="#2dda2d" />
    <polygon points="942,684 1086,669 1086,676 1000,684" fill="#166d16" />
    <polygon points="762,652 787,650 791,684 765,684" fill="#8800ff" />
    <polygon points="1009,549 1086,541 1086,554 1010,562" fill="#ffff33" />
    <polygon points="1010,562 1086,554 1086,574 1024,580 1024,632 1016,633" fill="#86821c" />
    <polygon points="978,455 980,455 1001,636 998,636" fill="#5f5c10" />
    <polygon points="972,387 991,385 1021,651 1002,654" fill="#2dda2d" />
    <polygon points="505,445 508,445 523,602 514,602 504,510" fill="#6b6812" />
    <polygon points="433,612 524,602 525,614 433,625" fill="#ffff33" />
    <polygon points="433,625 525,614 532,684 510,684 510,636 433,644" fill="#86821c" />
    <polygon points="504,439 524,437 551,684 531,684" fill="#2dda2d" />

    {/* beam annotation */}
    <path d="M685 281L698 392" stroke="#fff" strokeWidth="2" />
    <g fontSize="28" fill="#fff">
      <text x="687" y="284" transform="rotate(-6 687 284)">
        KL12(2) [1657<tspan fill="#787878">6]</tspan> 200*400
      </text>
      <text x="691" y="323" transform="rotate(-6 691 323)">
        C8<tspan fill="#c83cd0">@</tspan>100(2) 3<tspan fill="#a0a0a0">C</tspan><tspan fill="#787878">2</tspan>0;3C18
      </text>
    </g>

    {/* warning markers and grips */}
    <polygon points="601,382 636,428 578,434" fill="#ff0" />
    <polygon points="883,351 917,397 860,404" fill="#ff0" />
    <path d="M599 409H611V421H599ZM740 393H752V405H740ZM881 378H893V390H881Z" fill="#0f0" />

    <GridBubble x={712} y={173} text="18" />
    <GridBubble x={657} y={672} text="E" />
    <GridBubble x={1074} y={627} text="E" />

    {/* coordinate tripod */}
    <path d="M479 629L477 614" stroke="#00e000" strokeWidth="4" />
    <path d="M472 617L477 605L483 616Z" fill="#00c000" />
    <path d="M484 634L500 632" stroke="#f00" strokeWidth="4" />
    <path d="M498 627L509 631L498 637Z" fill="#d00000" />
    <path d="M476 634H484V637H476Z" fill="#ddd" />
    <circle cx="480" cy="631" r="5.500" fill="#0000c8" />
    <text x="476" y="604" fontSize="14" textAnchor="middle" fill="#00f000">Y</text>
    <text x="516" y="635" fontSize="14" textAnchor="middle" fill="#f02020">X</text>
  </Scene>
);

const VIEW = "#32405a";

const ViewToolbar = () => (
  <ViewTools>
    <ViewButton aria-label="动态观察">
      <svg width="24" height="24" viewBox="0 0 24 24">
        <defs>
          <radialGradient id="ball" cx=".35" cy=".25" r=".8">
            <stop offset="0" stopColor="#e6f0fa" />
            <stop offset="1" stopColor="#72849c" />
          </radialGradient>
        </defs>
        <circle cx="12" cy="12" r="9.500" fill="url(#ball)" stroke="#44546c" />
        <path d="M3 17Q14 17 18 7" stroke={VIEW} strokeWidth="1.500" fill="none" />
        <circle cx="19.500" cy="7" r="4" fill="url(#ball)" stroke="#44546c" />
        <circle cx="2.500" cy="17.500" r="1.500" fill="#8c9cb4" stroke={VIEW} />
      </svg>
    </ViewButton>
    <ViewButton aria-label="二维视图">
      <svg width="24" height="24" viewBox="0 0 24 24">
        <path d="M.5 .5H23.500V22.500H.5Z" fill="#8092ac" stroke={VIEW} />
        <text x="11" y="20" fontSize="8" fill="#1f2a3c" fontFamily="DejaVu Sans">2D</text>
      </svg>
    </ViewButton>
    <ViewButton aria-label="线框视图">
      <svg width="24" height="24" viewBox="0 0 24 24" stroke={VIEW}>
        <path d="M.5 5.500L6.500 .5H23.500V17.500L18.500 22.500H.5Z" fill="#cfe4fb" />
        <path d="M.5 5.500L6.500 .5H23.500L18.500 5.500Z" fill="#8a9bb4" />
        <path d="M18.500 5.500V22.500M6.500 5.500V17.500H18.500M1 22L6 17.500M23 17.500H18" fill="none" />
      </svg>
      <Caret color={VIEW} />
    </ViewButton>
    <ViewButton aria-label="实体视图">
      <svg width="24" height="24" viewBox="0 0 24 24" stroke={VIEW}>
        <path d="M.5 5.500L6.500 .5H23.500V17.500L18.500 22.500H.5Z" fill="#8294ae" />
        <path d="M.5 5.500H18.500V22.500M18.500 5.500L23.500 .5" fill="none" />
      </svg>
      <Caret color={VIEW} />
    </ViewButton>
    <ViewButton aria-label="旋转视图">
      <svg width="24" height="24" viewBox="0 0 24 24">
        <path d="M20 17A10 10 0 1 1 18 5L21 8" fill="none" stroke={VIEW} strokeWidth="2" />
        <path d="M22.500 2V9H15" fill="none" stroke={VIEW} strokeWidth="2" />
      </svg>
      <Caret color={VIEW} />
    </ViewButton>
    <ViewRule />
    <ViewButton aria-label="显示列表">
      <svg width="24" height="24" viewBox="0 0 24 24">
        <path d="M.5 3.500L3 .5H21L23.500 3.500V22.500H.5Z" fill="#8092ac" stroke={VIEW} />
        <path d="M1 3.500H23M11.500 9V20M3 6L5 8L7 5M14 6L16 8L18 5" stroke={VIEW} fill="none" />
        <path d="M3.500 9.500H5.500V11.500H3.500ZM3.500 13.500H5.500V15.500H3.500ZM3.500 17.500H5.500V19.500H3.500ZM14.500 9.500H16.500V11.500H14.500ZM14.500 13.500H16.500V15.500H14.500ZM14.500 17.500H16.500V19.500H14.500ZM7 10.500H9M7 14.500H9M7 18.500H9M18 10.500H20M18 14.500H20M18 18.500H20" stroke="#26344c" fill="none" />
      </svg>
    </ViewButton>
  </ViewTools>
);

const DisplaySettings = () => (
  <Settings>
    <SettingsGap />
    <SettingsTitle>显示设置</SettingsTitle>
    <SettingsTabs>
      <SettingsTab>图元显示</SettingsTab>
      <SettingsTab $active>楼层显示</SettingsTab>
    </SettingsTabs>
    <RadioRow>
      {["当前楼层", "相邻楼层", "全部楼层"].map((t, i) => (
        <RadioLabel key={t}>
          <input type="radio" name="scope" defaultChecked={i === 0} />
          {t}
        </RadioLabel>
      ))}
    </RadioRow>
    <FloorTree>
      <FloorRow $root>
        <svg width="8" height="8" viewBox="0 0 8 8">
          <path d="M1 6H7V0Z" fill="#2e2e2e" />
        </svg>
        <label>
          <Check $dim $partial disabled />
          全部楼层
        </label>
      </FloorRow>
      {floors.map((f) => (
        <FloorRow key={f}>
          <label>
            <Check $dim disabled defaultChecked={f === "第17层"} />
            {f}
          </label>
        </FloorRow>
      ))}
    </FloorTree>
    <SettingsFoot>
      <Check />
      其他区域图元亮显
    </SettingsFoot>
  </Settings>
);

const ErrorDialog = () => (
  <Dialog role="dialog" aria-label="错误">
    <DialogTitle>
      <span>错误 - 双击构件名称选择出错构件</span>
      <button aria-label="最大化">
        <svg width="8" height="7" viewBox="0 0 8 7">
          <path d="M.5 .5H7.500V6.500H.5ZM0 1.500H8" fill="none" stroke="#fff" />
        </svg>
      </button>
      <button aria-label="关闭">
        <svg width="8" height="8" viewBox="0 0 8 8">
          <path d="M.5 .5L7.500 7.500M7.500 .5L.5 7.500" stroke="#fff" strokeWidth="1.600" />
        </svg>
      </button>
    </DialogTitle>
    <DialogBody>
      <ErrorTable>
        <colgroup>
          <col width="52" />
          <col width="56" />
          <col width="56" />
          <col />
        </colgroup>
        <thead>
          <tr>
            <th>类型</th>
            <th>构件名称</th>
            <th>所属楼层</th>
            <th>错误描述</th>
          </tr>
        </thead>
        <tbody>
          <tr>
            <td>
              <div>
                <svg width="16" height="16" viewBox="0 0 16 16">
                  <path d="M0 0H16V16H0Z" fill="#a9cff0" />
                  <circle cx="8" cy="8" r="7.500" fill="#b3864e" />
                  <path d="M8 3V9M8 11V13" stroke="#f4f4f4" strokeWidth="2.400" />
                </svg>
                警告
              </div>
            </td>
            <td>KL12(2)</td>
            <td>第17层</td>
            <td>1跨.上通长筋1 长度为：14220，长度超出其图元所绘...</td>
          </tr>
        </tbody>
      </ErrorTable>
    </DialogBody>
    <Grip>
      <svg width="8" height="8" viewBox="0 0 8 8" fill="#808080">
        <path d="M6 0H8V2H6ZM3 3H5V5H3ZM6 3H8V5H6ZM0 6H2V8H0ZM3 6H5V8H3ZM6 6H8V8H6Z" />
      </svg>
    </Grip>
  </Dialog>
);

const StatusBar = () => (
  <Status>
    <Readouts>
      <Readout $w={263}>
        {[["X", "36289"], ["Y", "21523"], ["Z", "46780"]].map(([axis, value]) => (
          <Coordinate key={axis}>
            <span>{axis}</span>
            <span>=</span>
            <span>{value}</span>
          </Coordinate>
        ))}
      </Readout>
      <Readout $w={83}><span>层高：</span><span>2.9</span></Readout>
      <Readout $w={134}><span>标高：</span><span>46.78~49.68</span></Readout>
      <Readout $w={102}>1(1)</Readout>
      <Readout $w={99}>隐藏：0</Readout>
    </Readouts>
    <StatusButton $w={24} aria-label="正交">
      <svg width="14" height="14" viewBox="0 0 14 14" fill="none" stroke="#c8c8c8">
        <path d="M1.500 0V12.500H14M1.500 8.500H5.500V12" />
      </svg>
    </StatusButton>
    <StatusButton $w={36} $on aria-label="对象捕捉">
      <svg width="16" height="16" viewBox="0 0 16 16">
        <path d="M2.500 2.500H15.500V15.500H2.500Z" fill="none" stroke="#58a0e8" />
        <path d="M0 0H5V5H0Z" fill="#f09050" />
      </svg>
      <Caret />
    </StatusButton>
    <StatusButton $w={26} aria-label="交点捕捉">
      <svg width="16" height="16" viewBox="0 0 16 16" stroke="#777">
        <path d="M0 0L16 16M16 0L0 16" />
      </svg>
    </StatusButton>
    <StatusButton $w={35} aria-label="角度">
      <svg width="16" height="14" viewBox="0 0 16 14" stroke="#d0d0d0" fill="none">
        <path d="M12 1L1 12.500H16" />
        <path d="M5 6L9 10" />
      </svg>
      <Caret />
    </StatusButton>
    <StatusButton $w={35} aria-label="动态输入">
      <svg width="17" height="14" viewBox="0 0 17 14" stroke="#d0d0d0">
        <path d="M3.500 0V7M0 3.500H7" />
        <path d="M8 8H16V12H8Z" fill="#d0d0d0" />
      </svg>
      <Caret />
    </StatusButton>
    <StatusButton $w={72}>跨图层选择</StatusButton>
    <StatusButton $w={60}>折线选择</StatusButton>
    <Hint>按鼠标左键指定第一个角点，或拾取构件图元</Hint>
    <span>500 FPS</span>
  </Status>
);

export default function App() {
  return (
    <>
      <Global />
      <Page>
        <TopHeader />
        <RibbonBar />
        <SelectorBar>
          {selectors.map(([label, value]) => (
            <SelectBox key={label}>
              <select aria-label={label}>
                <option>{value}</option>
              </select>
              <Caret />
            </SelectBox>
          ))}
        </SelectorBar>
        <Workspace>
          <Navigation />
          <Splitter />
          <Layers />
          <Viewport>
            <Model />
            <ViewToolbar />
          </Viewport>
          <RightSplitter>
            <CollapseHandle aria-label="折叠面板">
              <svg width="4" height="7" viewBox="0 0 4 7">
                <path d="M0 0L4 3.500L0 7Z" fill="#aaa" />
              </svg>
            </CollapseHandle>
          </RightSplitter>
          <DisplaySettings />
          <ErrorDialog />
        </Workspace>
        <StatusBar />
      </Page>
    </>
  );
}
